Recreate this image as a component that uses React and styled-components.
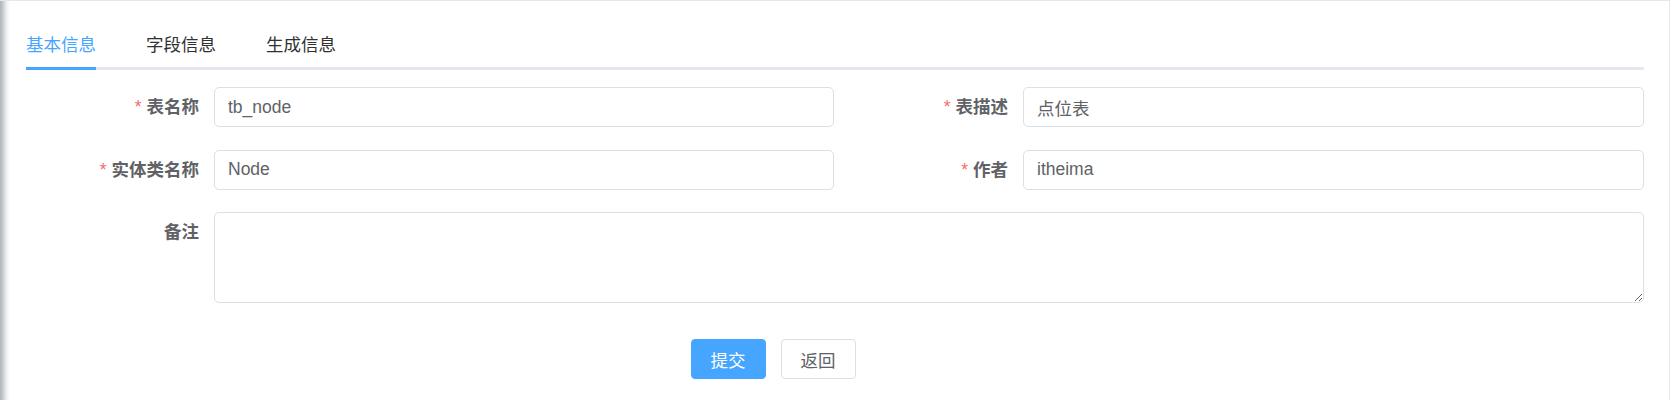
import React from "react";
import styled, { createGlobalStyle } from "styled-components";

const Global = createGlobalStyle`
  html, body { margin: 0; padding: 0; background: #fff; overflow: hidden; }
  body { font-family: "Liberation Sans", "Noto Sans CJK SC", Arial, sans-serif; }
  * { box-sizing: border-box; }
`;

const Card = styled.div`
  width: 1670px;
  height: 400px;
  background:
    linear-gradient(
      to right,
      rgba(0, 21, 41, 0.32) 0,
      rgba(0, 21, 41, 0.22) 3px,
      rgba(0, 21, 41, 0.08) 6px,
      rgba(0, 21, 41, 0) 10px
    ) left top / 12px 100% no-repeat,
    #fff;
  border-top: 1px solid #e4e7ed;
  border-right: 1px solid #e4e7ed;
  padding: 19px 25px 0 26px;
`;

const TabHeader = styled.div`
  display: flex;
  height: 50px;
  margin-bottom: 17px;
  background: linear-gradient(#e4e7ed, #e4e7ed) left bottom / 100% 3px no-repeat;
`;

const TabItem = styled.div`
  height: 50px;
  padding: 0 25px;
  &:first-child { padding-left: 0; }
`;

const TabLabel = styled.span`
  display: block;
  height: 50px;
  line-height: 50px;
  font-size: 17.5px;
  color: ${(p) => (p.$active ? "#46a6ff" : "#303133")};
  background: ${(p) =>
    p.$active ? "linear-gradient(#46a6ff, #46a6ff) left bottom / 100% 3px no-repeat" : "none"};
`;

const FormGrid = styled.div`
  display: grid;
  grid-template-columns: 809px 809px;
  row-gap: 22.5px;
`;

const FormItem = styled.div`
  display: flex;
  align-items: flex-start;
  grid-column: ${(p) => (p.$full ? "1 / span 2" : "auto")};
`;

const Label = styled.label`
  width: 188px;
  flex: none;
  text-align: right;
  padding-right: 15px;
  line-height: 40px;
  font-size: 17.5px;
  font-weight: 700;
  color: #606266;
`;

const Star = styled.span`
  color: #f56c6c;
  margin-right: 5px;
  font-weight: 400;
`;

const Input = styled.input`
  flex: 1;
  height: 40px;
  margin-right: ${(p) => (p.$gapRight ? "1px" : "0")};
  border: 1px solid #dcdfe6;
  border-radius: 5px;
  padding: 0 13px;
  font-family: "Liberation Sans", "Noto Sans CJK SC", Arial, sans-serif;
  font-size: 17.5px;
  color: #606266;
  background: #fff;
  outline: none;
`;

const TextArea = styled.textarea`
  flex: 1;
  height: 91px;
  border: 1px solid #dcdfe6;
  border-radius: 5px;
  padding: 6px 13px;
  font-family: "Liberation Sans", "Noto Sans CJK SC", Arial, sans-serif;
  font-size: 17.5px;
  color: #606266;
  background: #fff;
  outline: none;
  resize: vertical;
`;

const Actions = styled.div`
  display: flex;
  justify-content: center;
  gap: 15px;
  margin-top: 36px;
  padding-right: 124px;
`;

const Button = styled.button`
  height: 40px;
  padding: 0 19px;
  border-radius: 4px;
  font-family: "Liberation Sans", "Noto Sans CJK SC", Arial, sans-serif;
  font-size: 17.5px;
  border: 1px solid ${(p) => (p.$primary ? "#46a6ff" : "#dcdfe6")};
  background: ${(p) => (p.$primary ? "#46a6ff" : "#fff")};
  color: ${(p) => (p.$primary ? "#fff" : "#606266")};
  cursor: pointer;
`;

const Field = ({ label, required, value, gapRight }) => (
  <FormItem>
    <Label>
      {required && <Star>*</Star>}
      {label}
    </Label>
    <Input defaultValue={value} $gapRight={gapRight} />
  </FormItem>
);

export default function App() {
  return (
    <>
      <Global />
      <Card>
        <TabHeader>
          <TabItem><TabLabel $active>基本信息</TabLabel></TabItem>
          <TabItem><TabLabel>字段信息</TabLabel></TabItem>
          <TabItem><TabLabel>生成信息</TabLabel></TabItem>
        </TabHeader>
        <FormGrid>
          <Field label="表名称" required value="tb_node" gapRight />
          <Field label="表描述" required value="点位表" />
          <Field label="实体类名称" required value="Node" gapRight />
          <Field label="作者" required value="itheima" />
          <FormItem $full>
            <Label>备注</Label>
            <TextArea />
          </FormItem>
        </FormGrid>
        <Actions>
          <Button $primary>提交</Button>
          <Button>返回</Button>
        </Actions>
      </Card>
    </>
  );
}
